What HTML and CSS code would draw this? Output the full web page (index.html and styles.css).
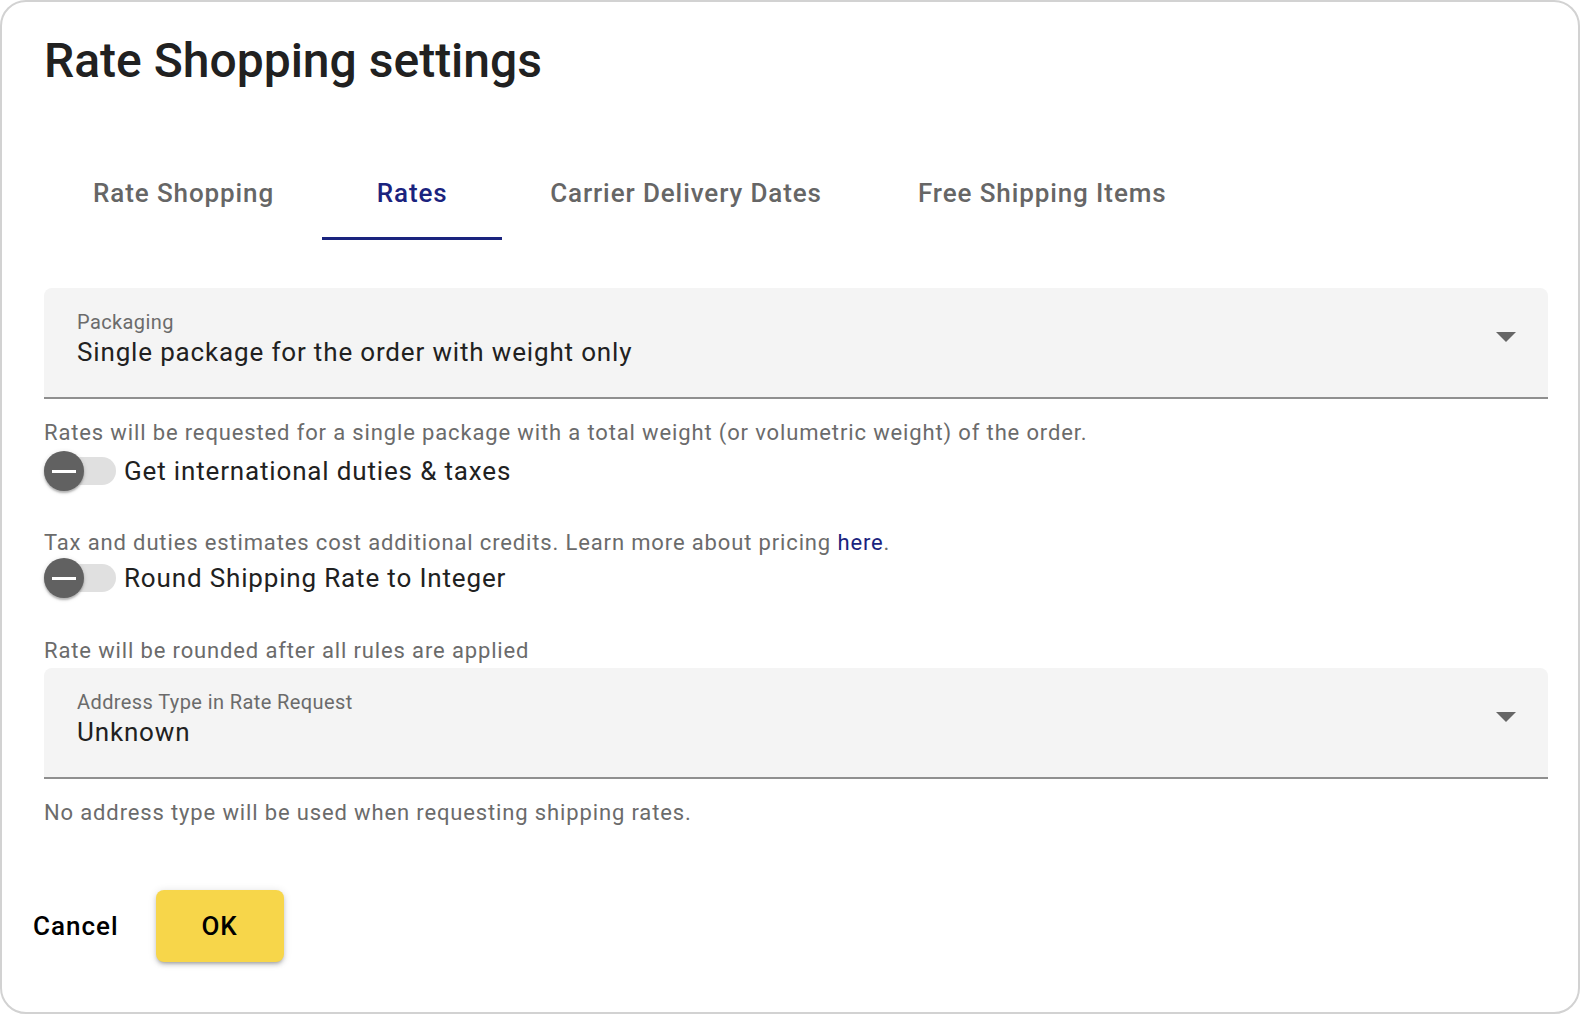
FILE: index.html
```html
<!DOCTYPE html>
<html lang="en">
<head>
<meta charset="utf-8">
<title>Rate Shopping settings</title>
<link rel="stylesheet" href="styles.css">
</head>
<body>
<div class="dialog">
  <div class="content">
    <h1 class="title">Rate Shopping settings</h1>
    <nav class="tabs">
      <div class="tab">Rate Shopping</div>
      <div class="tab active">Rates</div>
      <div class="tab">Carrier Delivery Dates</div>
      <div class="tab">Free Shipping Items</div>
    </nav>

    <div class="field first">
      <div class="field-text">
        <div class="field-label">Packaging</div>
        <div class="field-value">Single package for the order with weight only</div>
      </div>
      <span class="arrow"></span>
    </div>
    <p class="hint">Rates will be requested for a single package with a total weight (or volumetric weight) of the order.</p>

    <div class="toggle-row first-toggle">
      <span class="toggle"><span class="track"></span><span class="thumb"><span class="minus"></span></span></span>
      <span class="toggle-label">Get international duties &amp; taxes</span>
    </div>
    <p class="hint spaced">Tax and duties estimates cost additional credits. Learn more about pricing <a class="link" href="#">here</a>.</p>

    <div class="toggle-row second-toggle">
      <span class="toggle"><span class="track"></span><span class="thumb"><span class="minus"></span></span></span>
      <span class="toggle-label">Round Shipping Rate to Integer</span>
    </div>
    <p class="hint spaced last-spaced">Rate will be rounded after all rules are applied</p>

    <div class="field second">
      <div class="field-text">
        <div class="field-label">Address Type in Rate Request</div>
        <div class="field-value">Unknown</div>
      </div>
      <span class="arrow"></span>
    </div>
    <p class="hint">No address type will be used when requesting shipping rates.</p>
  </div>

  <div class="actions">
    <button class="btn btn-text">Cancel</button>
    <button class="btn btn-ok">OK</button>
  </div>
</div>
</body>
</html>
```

FILE: styles.css
```css
html, body {
  margin: 0;
  padding: 0;
  background: #ffffff;
}

body {
  font-family: Roboto, "Liberation Sans", Arial, sans-serif;
  color: #212121;
}

.dialog {
  box-sizing: border-box;
  width: 1580px;
  height: 1014px;
  border: 2px solid #d2d2d2;
  border-radius: 26px;
  background: #ffffff;
  overflow: hidden;
}

.content {
  padding: 0 30px 0 42px;
}

.title {
  margin: 31px 0 0 0;
  font-size: 48px;
  line-height: 56px;
  font-weight: 500;
  color: #212121;
  letter-spacing: 0;
}

.tabs {
  display: flex;
  margin-top: 56px;
  height: 95px;
}

.tab {
  box-sizing: border-box;
  min-width: 180px;
  padding: 3px 48px 0 48px;
  height: 95px;
  display: flex;
  align-items: center;
  justify-content: center;
  font-size: 26px;
  font-weight: 500;
  letter-spacing: 0.9px;
  color: #666666;
  white-space: nowrap;
  border-bottom: 3px solid transparent;
}

.tab:first-child {
  padding-left: 49px;
}

.tab.active {
  color: #1a237e;
  border-bottom-color: #1a237e;
}

.field {
  box-sizing: border-box;
  display: flex;
  align-items: flex-start;
  height: 111px;
  padding: 22px 32px 0 33px;
  background: #f4f4f4;
  border-radius: 8px 8px 0 0;
  border-bottom: 2px solid #8f8f8f;
}

.field.first {
  margin-top: 48px;
}

.field.second {
  margin-top: 3px;
}

.field-text {
  flex: 1;
}

.field-label {
  font-size: 20px;
  line-height: 24px;
  letter-spacing: 0.4px;
  color: #6b6b6b;
}

.field-value {
  margin-top: 2px;
  font-size: 26px;
  line-height: 32px;
  letter-spacing: 0.84px;
  color: #212121;
}

.arrow {
  margin-top: 22px;
  width: 0;
  height: 0;
  border-left: 10px solid transparent;
  border-right: 10px solid transparent;
  border-top: 10px solid #666666;
}

.hint {
  margin: 20px 0 0 0;
  font-size: 22px;
  line-height: 28px;
  letter-spacing: 0.86px;
  color: #6b6b6b;
}

.hint.spaced {
  margin-top: 38px;
}

.hint.last-spaced {
  margin-top: 39px;
}

.link {
  color: #1a237e;
  text-decoration: none;
}

.toggle-row {
  display: flex;
  align-items: center;
  height: 40px;
}

.toggle-row.first-toggle {
  margin-top: 4px;
}

.toggle-row.second-toggle {
  margin-top: 1px;
}

.toggle {
  position: relative;
  width: 72px;
  height: 40px;
  flex: none;
  display: flex;
  align-items: center;
}

.track {
  width: 72px;
  height: 28px;
  border-radius: 14px;
  background: #e0e0e0;
}

.thumb {
  position: absolute;
  left: 0;
  top: 0;
  width: 40px;
  height: 40px;
  border-radius: 50%;
  background: #616161;
  box-shadow: 0 2px 2px rgba(0,0,0,0.24), 0 1px 5px rgba(0,0,0,0.14);
  display: flex;
  align-items: center;
  justify-content: center;
}

.minus {
  width: 24px;
  height: 3px;
  background: #ffffff;
}

.toggle-label {
  margin-left: 8px;
  font-size: 26px;
  line-height: 32px;
  letter-spacing: 0.84px;
  color: #212121;
}

.actions {
  display: flex;
  align-items: center;
  gap: 22px;
  padding-left: 15px;
  margin-top: 63px;
}

.btn {
  font-family: Roboto, "Liberation Sans", Arial, sans-serif;
  font-size: 26px;
  font-weight: 500;
  letter-spacing: 1px;
  border: none;
  cursor: pointer;
  color: #000000;
}

.btn-text {
  background: transparent;
  padding: 0 15px 0 16px;
  height: 72px;
}

.btn-ok {
  width: 128px;
  height: 72px;
  border-radius: 8px;
  background: #f7d64a;
  box-shadow: 0 3px 3px -2px rgba(0,0,0,0.2), 0 3px 4px 0 rgba(0,0,0,0.14), 0 1px 8px 0 rgba(0,0,0,0.12);
}
```
